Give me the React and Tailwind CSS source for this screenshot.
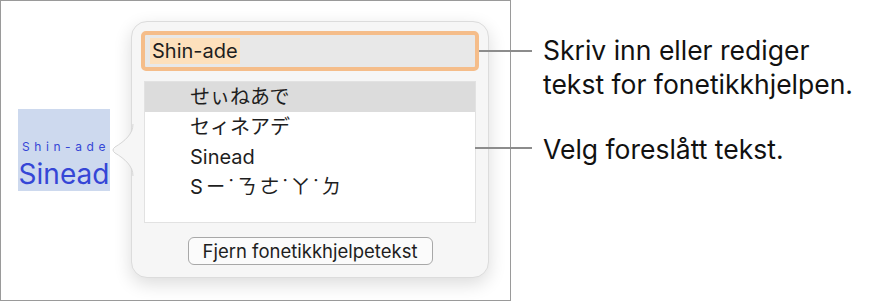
import React from "react";

const sans = { fontFamily: 'Inter, "Noto Sans CJK JP", sans-serif' };

function Arrow() {
  return (
    <svg
      className="absolute left-[-21px] top-[102px]"
      width="23"
      height="52"
      viewBox="0 0 23 52"
    >
      <path
        d="M22 0 C22 10 14 17 4 23 Q0 26 4 29 C14 35 22 42 22 52 Z"
        fill="#f6f6f6"
      />
      <path
        d="M22 0 C22 10 14 17 4 23 Q0 26 4 29 C14 35 22 42 22 52"
        fill="none"
        stroke="#d6d6d6"
        strokeWidth="1"
      />
    </svg>
  );
}

function Popover() {
  const rows = ["セィネアデ", "Sinead"];
  return (
    <div className="relative ml-[21px] w-[358px] h-[257px] rounded-[16px] border border-[#dcdcdc] bg-[#f6f6f6] shadow-[0_6px_18px_rgba(0,0,0,0.14)] px-[9px] pt-[9px]">
      <Arrow />
      {/* field */}
      <div className="h-[40px] rounded-[5px] border-[4px] border-[#f5bd8a] bg-[#e8e8e8] flex items-center pl-[5px]">
        <span className="h-[26px] px-[2px] bg-[#fde0bc] text-[20px] leading-[26px] text-[#1e1e1e]">
          Shin-ade
        </span>
      </div>
      {/* suggestions */}
      <div className="mt-[10px] mx-[3px] h-[142px] border border-[#e2e2e2] bg-white">
        <div className="h-[30px] bg-[#dcdcdc] pl-[45px] text-[20px] leading-[30px] text-[#1e1e1e]">
          せぃねあで
        </div>
        {rows.map((r) => (
          <div key={r} className="h-[30px] pl-[45px] text-[20px] leading-[30px] text-[#1e1e1e]">
            {r}
          </div>
        ))}
        <div
          className="h-[30px] pl-[45px] text-[20px] leading-[30px] tracking-[3px] text-[#1e1e1e] whitespace-nowrap"
          style={{ fontFamily: 'Inter, "Noto Sans CJK TC", sans-serif' }}
        >
          Sㄧ˙ㄋㄜ˙ㄚ˙ㄉ
        </div>
      </div>
      <div className="flex justify-center mt-[14px]">
        <button className="h-[28px] w-[245px] rounded-[6px] border border-[#a8a8a8] bg-[#fbfbfb] text-[18.5px] leading-[26px] text-[#1e1e1e] whitespace-nowrap">
          Fjern fonetikkhjelpetekst
        </button>
      </div>
    </div>
  );
}

export default function App() {
  return (
    <div className="relative w-[875px] h-[301px] bg-white flex" style={sans}>
      {/* screenshot frame */}
      <div className="w-[511px] h-[301px] border border-[#9a9a9a] flex items-start pl-[17px] pt-[20px]">
        <div className="mt-[88px] w-[92px] h-[82px] bg-[#cdd9ee] flex flex-col items-center pt-[31px] text-[#3546d6]">
          <span className="whitespace-nowrap text-[12px] leading-[14px] tracking-[4.6px] pl-[4px]">Shin-ade</span>
          <span className="mt-[4px] text-[28px] leading-[32px]">Sinead</span>
        </div>
        <Popover />
      </div>

      {/* callouts */}
      <div className="absolute left-[479px] top-[50px] w-[53px] h-[2px] bg-[#8c8c8c]" />
      <div className="absolute left-[475px] top-[147px] w-[57px] h-[2px] bg-[#8c8c8c]" />

      <div className="ml-[32px] pt-[33px] text-[26.5px] leading-[34px] text-[#111] whitespace-nowrap">
        <p>Skriv inn eller rediger</p>
        <p>tekst for fonetikkhjelpen.</p>
        <p className="mt-[31px]">Velg foreslått tekst.</p>
      </div>
    </div>
  );
}
